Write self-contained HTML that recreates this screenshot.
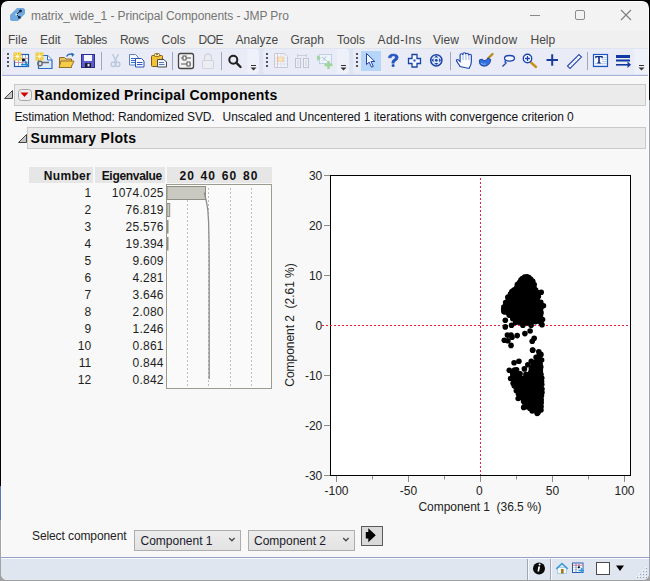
<!DOCTYPE html>
<html><head><meta charset="utf-8">
<style>
*{margin:0;padding:0;box-sizing:border-box}
html,body{width:650px;height:581px;overflow:hidden;background:#000;font-family:"Liberation Sans",sans-serif}
.a{position:absolute}
.t{position:absolute;white-space:nowrap;font-size:12px;line-height:12px;color:#1e1e1e}
.r{text-align:right}
.b{font-weight:bold}
svg{position:absolute;overflow:visible}
</style></head>
<body>
<div class="a" style="left:0;top:486px;width:1px;height:34px;background:#5a78b8"></div>
<div class="a" style="left:0;top:520px;width:12px;height:61px;background:#a4a4a4"></div>
<div class="a" style="left:649px;top:100px;width:1px;height:481px;background:#9ea2b2"></div>
<div class="a" style="left:0;top:575px;width:650px;height:6px;background:#a0a0a0"></div>
<div id="frame" class="a" style="left:1px;top:1px;width:648px;height:579px;background:#fcfcfc;border-radius:7px 7px 6px 6px;overflow:hidden">
<div class="a" style="left:-1px;top:-1px;width:650px;height:581px">
 <!-- title bar -->
 <div class="a" style="left:2px;top:2px;width:646px;height:29px;background:#f3f3f3"></div>
 <svg style="left:0;top:0" width="650" height="31">
  <polygon points="17,8 23.5,8 25,9.5 25,13.8 19,20 17.5,21 11.5,21 10,19.5 10,15" fill="#6fa9e0"/>
  <polyline points="20.5,11 16.3,14.5 19.4,17.4" fill="none" stroke="#1b2535" stroke-width="1"/>
  <rect x="19.3" y="9.8" width="2.4" height="2.4" rx="0.6" fill="#0f1a2a"/>
  <rect x="18.2" y="16.2" width="2.4" height="2.4" rx="0.6" fill="#0f1a2a"/>
  <circle cx="16.3" cy="14.5" r="1" fill="#d8ecff"/>
  <line x1="530" y1="15.5" x2="540" y2="15.5" stroke="#8a8a8a" stroke-width="1"/>
  <rect x="575.5" y="10.5" width="9" height="9" rx="1.5" fill="none" stroke="#8a8a8a" stroke-width="1"/>
  <path d="M621 10 L631 20 M631 10 L621 20" stroke="#7e7e7e" stroke-width="1.1"/>
 </svg>
 <div class="t" style="left:31px;top:10px;color:#757575;letter-spacing:-0.09px">matrix_wide_1 - Principal Components - JMP Pro</div>

 <!-- menu bar -->
 <div class="a" style="left:2px;top:31px;width:646px;height:17px;background:#f0f0f0"></div>
 <div class="t" style="left:8px;top:34px;color:#474747">File</div>
 <div class="t" style="left:40px;top:34px;color:#474747">Edit</div>
 <div class="t" style="left:74.5px;top:34px;color:#474747;letter-spacing:-0.4px">Tables</div>
 <div class="t" style="left:120px;top:34px;color:#474747;letter-spacing:-0.3px">Rows</div>
 <div class="t" style="left:161.5px;top:34px;color:#474747">Cols</div>
 <div class="t" style="left:198.5px;top:34px;color:#474747;letter-spacing:-0.5px">DOE</div>
 <div class="t" style="left:235.5px;top:34px;color:#474747">Analyze</div>
 <div class="t" style="left:290.5px;top:34px;color:#474747">Graph</div>
 <div class="t" style="left:337px;top:34px;color:#474747">Tools</div>
 <div class="t" style="left:377.5px;top:34px;color:#474747;letter-spacing:0.45px">Add-Ins</div>
 <div class="t" style="left:433px;top:34px;color:#474747">View</div>
 <div class="t" style="left:472.5px;top:34px;color:#474747;letter-spacing:0.4px">Window</div>
 <div class="t" style="left:530.5px;top:34px;color:#474747">Help</div>

 <!-- toolbar -->
 <div class="a" style="left:2px;top:48px;width:646px;height:27px;background:#dfe4f2"></div>
 <div class="a" style="left:3px;top:49px;width:256px;height:25px;background:#e9ecf6;border-radius:4px"></div>
 <div class="a" style="left:263px;top:49px;width:86px;height:25px;background:#e9ecf6;border-radius:4px"></div>
 <div class="a" style="left:353px;top:49px;width:295px;height:25px;background:#e9ecf6;border-radius:4px 0 0 4px"></div>
 <div class="a" style="left:2px;top:75px;width:646px;height:1px;background:#a7b0d8"></div>
 <div class="a" style="left:2px;top:76px;width:646px;height:1px;background:#fcfcfc"></div>
 <svg id="tb" style="left:0;top:0" width="650" height="76">
  <!-- chevron lighter areas -->
  <path d="M247.5 49h7.5a4 4 0 0 1 4 4v17a4 4 0 0 1-4 4h-7.5z" fill="#eef1fa"/>
  <path d="M337 49h8a4 4 0 0 1 4 4v17a4 4 0 0 1-4 4h-8z" fill="#eef1fa"/>
  <rect x="634.5" y="49" width="14" height="25" fill="#eef1fa"/>
  <!-- grips -->
  <g fill="#525260">
   <rect x="7" y="53" width="2" height="2"/><rect x="7" y="57" width="2" height="2"/><rect x="7" y="61" width="2" height="2"/><rect x="7" y="65" width="2" height="2"/>
   <rect x="266" y="53" width="2" height="2"/><rect x="266" y="57" width="2" height="2"/><rect x="266" y="61" width="2" height="2"/><rect x="266" y="65" width="2" height="2"/>
   <rect x="356" y="53" width="2" height="2"/><rect x="356" y="57" width="2" height="2"/><rect x="356" y="61" width="2" height="2"/><rect x="356" y="65" width="2" height="2"/>
  </g>
  <!-- icon1 new data table -->
  <rect x="14.5" y="54.5" width="14" height="12" fill="#fff" stroke="#1f5db5" stroke-width="1.2"/>
  <path d="M15 58.5H28M15 62.5H28" stroke="#e07a7a" stroke-width="0.8"/>
  <path d="M18.5 55V66M22.5 55V66M25.5 55V66" stroke="#7aa0d8" stroke-width="0.8"/>
  <path d="M13.5 52.5h8v8h-8z" fill="#f0c838"/>
  <path d="M17.5 52.5v8M13.5 56.5h8M14.5 53.5l6 6M20.5 53.5l-6 6" stroke="#fbeaa0" stroke-width="0.8"/>
  <circle cx="17.5" cy="56.5" r="1.3" fill="#fffbe8"/>
  <circle cx="23.5" cy="60" r="1.6" fill="#111"/>
  <path d="M21 64.5h8M25.5 61l2 6" stroke="#1b8ad8" stroke-width="1.6"/>
  <!-- icon2 new script -->
  <path d="M38.5 55.5h9l4.5 4.5v8.5h-13.5z" fill="#dceafa" stroke="#2d6cc0" stroke-width="1.2"/>
  <path d="M47.5 55.5v4.5h4.5" fill="#fff" stroke="#2d6cc0" stroke-width="1"/>
  <path d="M35.5 52.5h8v8h-8z" fill="#f0c838"/>
  <path d="M39.5 52.5v8M35.5 56.5h8M36.5 53.5l6 6M42.5 53.5l-6 6" stroke="#fbeaa0" stroke-width="0.8"/>
  <circle cx="39.5" cy="56.5" r="1.3" fill="#fffbe8"/>
  <circle cx="40" cy="63.5" r="2.2" fill="none" stroke="#6a6a6a" stroke-width="1.4"/>
  <path d="M42 62.5h7" stroke="#6a6a6a" stroke-width="1.6"/>
  <!-- icon3 folder -->
  <path d="M59.5 57.5h5l1.5 1.5h5.5v8.5h-12z" fill="#e9c15e" stroke="#8a6a2a" stroke-width="1"/>
  <path d="M61 61h13l-3 6.5h-12z" fill="#f6cd45" stroke="#8a6a2a" stroke-width="0.9"/>
  <path d="M66.5 56.5q2-3.5 6-2" fill="none" stroke="#2a6ab8" stroke-width="1.4"/>
  <path d="M71.5 52.5l3 2-2.5 2.5z" fill="#2a6ab8"/>
  <!-- icon4 floppy -->
  <rect x="81.5" y="54.5" width="13" height="13" fill="#5b5bd0" stroke="#2e2e8a" stroke-width="1"/>
  <rect x="84" y="55" width="8" height="6" fill="#f4f6fb"/>
  <rect x="85" y="63" width="6" height="4.5" fill="#1a1a2a"/>
  <rect x="87.5" y="63.8" width="2" height="2.6" fill="#e8e8f0"/>
  <!-- separators -->
  <g fill="#a2a6ba">
   <rect x="101" y="52" width="1" height="18"/><rect x="172" y="52" width="1" height="18"/><rect x="221" y="52" width="1" height="18"/>
   <rect x="450" y="52" width="1" height="18"/><rect x="587" y="52" width="1" height="18"/>
  </g>
  <!-- scissors disabled -->
  <path d="M112.5 54l4 8M118.5 54l-4 8" stroke="#b9c6de" stroke-width="1.4"/>
  <circle cx="113.3" cy="64.3" r="2.2" fill="none" stroke="#b9c6de" stroke-width="1.4"/>
  <circle cx="117.7" cy="64.3" r="2.2" fill="none" stroke="#b9c6de" stroke-width="1.4"/>
  <!-- copy -->
  <path d="M129.5 54.5h6l2.5 2.5v8h-8.5z" fill="#f6f9ff" stroke="#6080b8" stroke-width="1"/>
  <path d="M131 58.5h5M131 60.5h5M131 62.5h4" stroke="#3a6ad0" stroke-width="1"/>
  <path d="M135.5 58.5h6l2.5 2.5v6h-8.5z" fill="#ffffff" stroke="#2a55b8" stroke-width="1"/>
  <path d="M137 62.5h5.5M137 64.5h5.5" stroke="#2a5ac8" stroke-width="1"/>
  <!-- paste -->
  <rect x="151.5" y="55.5" width="11" height="11" rx="1" fill="#f2c232" stroke="#7a5a20" stroke-width="1"/>
  <rect x="154.5" y="53.5" width="5" height="3" rx="1" fill="#f8e8a0" stroke="#7a5a20" stroke-width="0.8"/>
  <circle cx="157" cy="54.5" r="0.8" fill="#7a5a20"/>
  <path d="M157.5 59.5h6.5l2.5 2.5v5h-9z" fill="#eef2fa" stroke="#4a4a50" stroke-width="1"/>
  <path d="M159 62.5h5M159 64.5h5.5" stroke="#5a7ab8" stroke-width="1"/>
  <!-- settings -->
  <rect x="178.5" y="53.5" width="15" height="15" rx="2" fill="#f4f4f4" stroke="#454545" stroke-width="1.3"/>
  <path d="M181 58h10M181 64h10" stroke="#555" stroke-width="1"/>
  <rect x="183" y="56" width="3" height="4" fill="#fff" stroke="#444" stroke-width="0.9"/>
  <rect x="187" y="62" width="3" height="4" fill="#fff" stroke="#444" stroke-width="0.9"/>
  <!-- lock disabled -->
  <path d="M204.5 60v-2.5a3.5 3.5 0 0 1 7 0v2.5" fill="none" stroke="#d2d4da" stroke-width="1.3"/>
  <rect x="202.5" y="60.5" width="11" height="8" rx="1" fill="#eceef4" stroke="#d2d4da" stroke-width="1.1"/>
  <!-- magnifier -->
  <circle cx="233.3" cy="59.8" r="4" fill="none" stroke="#222" stroke-width="2"/>
  <path d="M236.2 62.7l4.3 4.3" stroke="#222" stroke-width="2.4" stroke-linecap="round"/>
  <!-- dropdown arrows -->
  <g fill="#333">
   <rect x="251" y="65" width="5" height="1"/><path d="M250.5 67.5h6l-3 3z"/>
   <rect x="341" y="65" width="5" height="1"/><path d="M340.5 67.5h6l-3 3z"/>
   <rect x="639" y="65" width="5" height="1"/><path d="M638.5 67.5h6l-3 3z"/>
  </g>
  <!-- section2 disabled icons -->
  <path d="M274.5 53.5h10l3 3v11h-13z" fill="#f4f6fb" stroke="#c4cade" stroke-width="1"/>
  <path d="M275 58h12M275 61h12M275 64h12M281 54v13M284 54v13" stroke="#d4dcec" stroke-width="0.8"/>
  <rect x="277" y="56.5" width="7" height="5.5" fill="#f3d4b4"/>
  <rect x="279" y="57.5" width="3" height="3.5" fill="#f4ecb0"/>
  <path d="M277.5 54v13.5" stroke="#eab0b0" stroke-width="0.8"/>
  <rect x="295.5" y="58.5" width="5" height="9" fill="#eef0f6" stroke="#bfc3d2" stroke-width="1"/>
  <rect x="303.5" y="58.5" width="5" height="9" fill="#eef0f6" stroke="#bfc3d2" stroke-width="1"/>
  <path d="M297 61h2M297 63h2M297 65h2M305 61h2M305 63h2M305 65h2M298 55.5h8" stroke="#c0c4d2" stroke-width="0.8"/>
  <path d="M297.5 54v3M306.5 54v3" stroke="#c0c4d2" stroke-width="0.8"/>
  <rect x="319.5" y="54.5" width="12" height="9" fill="#f0f3f8" stroke="#bcd0e8" stroke-width="1"/>
  <path d="M317 55l4 3-4 3z" fill="#9fd49a"/>
  <path d="M322 57l5 4M326 56.5l-3 4" stroke="#9ec0e4" stroke-width="0.9"/>
  <path d="M328.5 61v8M324.5 65h8" stroke="#9fd49a" stroke-width="2.4"/>
  <!-- selected arrow box -->
  <rect x="361" y="51" width="20" height="20" fill="#b5d6f8"/>
  <path d="M366.5 53.5v11l2.7-2.3 2.3 5 1.8-0.8-2.2-4.9h3.7z" fill="#f4f8ff" stroke="#2242a8" stroke-width="1"/>
  <!-- question -->
  <path d="M388.3 57.8Q388.6 54 393.2 54Q398.2 54 398.2 57.6Q398.2 59.9 395.3 61.2Q394.3 61.8 394.3 63.2H391.8Q391.6 60.6 393.4 59.5Q395.3 58.4 395.3 57.4Q395.3 55.8 393.3 55.8Q391.4 55.8 391.3 57.8Z" fill="#2455c0" stroke="#2455c0" stroke-width="0.5"/><circle cx="393.1" cy="65.4" r="1.5" fill="#2455c0"/>
  <!-- cross -->
  <path d="M412 54.5h5v4h3.5v5h-3.5v3.5h-5v-3.5h-3.5v-5h3.5z" fill="#f6f9ff" stroke="#1a44a8" stroke-width="1.3"/>
  <rect x="413.5" y="59.5" width="2" height="2" fill="#1a44a8"/>
  <!-- target -->
  <circle cx="436.3" cy="60.3" r="5.6" fill="#dbe6f8" stroke="#1a44a8" stroke-width="1.5"/>
  <path d="M436.3 55.5l-2 2h4zM436.3 65.1l-2-2h4zM431.5 60.3l2-2v4zM441.1 60.3l-2-2v4z" fill="#1a44a8"/>
  <circle cx="436.3" cy="60.3" r="1.4" fill="#1a44a8"/>
  <!-- hand -->
  <g transform="translate(456 0) scale(1.17 1) translate(-456 0)">
  <path d="M459.5 66.5l-3-5.5q-0.5-1.5 1-1.5l2 2v-6.5q0-1.3 1.2-1.3t1.2 1.3v-1q0-1.2 1.2-1.2t1.2 1.2v0.5q0-1.2 1.2-1.2t1.2 1.2v1q0-1.2 1.2-1.2t1.2 1.2v6.5q0 2.5-2 6.5z" fill="#fbfcff" stroke="#1a44b0" stroke-width="1"/>
  <path d="M462 55v5M464.5 55v5M467 55v5" stroke="#6a8ad0" stroke-width="0.6"/>
  </g>
  <!-- brush -->
  <path d="M488 58.5l4.5-4.5" stroke="#b88a20" stroke-width="2.4" stroke-linecap="round"/>
  <path d="M479.6 59.8Q478.4 66.2 484.5 66.2Q490 65.8 490.8 59.6L488 58Q486.6 60.8 484.2 60.6Q482.6 60.4 482.4 59.2Z" fill="#2f6fe2" stroke="#1a3a98" stroke-width="0.9"/>
  <path d="M481 63.2Q483 64.8 486 64" fill="none" stroke="#9cc4ff" stroke-width="0.8"/>
  <!-- lasso -->
  <ellipse cx="509.5" cy="58.3" rx="5" ry="2.8" fill="#f3f6ff" stroke="#1a44b0" stroke-width="1.3"/>
  <path d="M505.5 60.5q-1 2 0.5 2.5l-3.5 3.5" fill="none" stroke="#1a44b0" stroke-width="1.3"/>
  <!-- zoom plus -->
  <path d="M531 62.5l5 4.5" stroke="#c8901e" stroke-width="2.4" stroke-linecap="round"/>
  <circle cx="527.5" cy="58.5" r="4.2" fill="#fff" stroke="#1a44b0" stroke-width="1.4"/>
  <path d="M525 58.5h5M527.5 56v5" stroke="#1a44b0" stroke-width="1.3"/>
  <!-- plus -->
  <path d="M546.5 60h11.5M552.2 54.2v11.5" stroke="#1c3a9a" stroke-width="2"/>
  <!-- ruler -->
  <path d="M567.5 66l11.5-11.5 2.5 2.5-11.5 11.5z" fill="#fff" stroke="#2a4ab0" stroke-width="1.1"/>
  <path d="M571 64.5l1 1M573 62.5l1 1M575 60.5l1 1M577 58.5l1 1" stroke="#7a90d0" stroke-width="0.8"/>
  <!-- T box -->
  <rect x="593.5" y="54.5" width="14" height="12" fill="#fbfcff" stroke="#1a55c8" stroke-width="1.2"/>
  <path d="M602 57.5h5M602 59.5h5M602 61.5h5M595 63.5h12M595 65.3h12" stroke="#b4c8e6" stroke-width="0.9"/>
  <path d="M595.3 56h7.4v2.2h-0.9l-0.4-0.9h-1.6v4.9l0.9 0.4v0.8h-3.4v-0.8l0.9-0.4v-4.9h-1.6l-0.4 0.9h-0.9z" fill="#0c2a88"/>
  <!-- lines arrow -->
  <rect x="616" y="55" width="14" height="3" fill="#0f38a0"/>
  <rect x="616" y="59.5" width="14" height="2" fill="#0f38a0"/>
  <rect x="616" y="64" width="12" height="1.6" fill="#0f38a0"/>
  <path d="M627.5 61.5l3.5 3.3-3.5 3.3z" fill="#0f38a0"/>
 </svg>

 <!-- content -->
 <div class="a" style="left:2px;top:77px;width:646px;height:480px;background:#f8f8f8"></div>
 <!-- header 1 -->
 <div class="a" style="left:14px;top:84px;width:632px;height:22px;background:#ebebeb;border:1px solid #c9c9c9"></div>
 <div class="a" style="left:27px;top:127px;width:619px;height:22px;background:#ebebeb;border:1px solid #c9c9c9"></div>
 <svg style="left:0;top:0" width="650" height="160">
  <path d="M4.5 98.5L12.5 90.5V98.5Z" fill="#c4c4c4" stroke="#454545" stroke-width="1" stroke-linejoin="round"/>
  <path d="M18.5 142.5L26.5 134.5V142.5Z" fill="#c4c4c4" stroke="#454545" stroke-width="1" stroke-linejoin="round"/>
  <rect x="18.5" y="89.5" width="13" height="11" rx="3" fill="#eeeeee" stroke="#a6a6a6" stroke-width="1"/>
  <path d="M20.5 92.5h8l-4 4.5z" fill="#d40000"/>
 </svg>
 <div class="t b" style="left:34.3px;top:88px;font-size:14px;line-height:14px;color:#050505;letter-spacing:0.24px">Randomized Principal Components</div>
 <div class="t" style="left:14.5px;top:111px;color:#141418;letter-spacing:-0.14px">Estimation Method: Randomized SVD.</div>
 <div class="t" style="left:222.5px;top:111px;color:#141418;letter-spacing:-0.035px">Unscaled and Uncentered 1 iterations with convergence criterion 0</div>
 <div class="t b" style="left:30.5px;top:131px;font-size:14px;line-height:14px;color:#050505;letter-spacing:0.3px">Summary Plots</div>

 <!-- table header -->
 <div class="a" style="left:29px;top:167px;width:64px;height:16px;background:#e6e6e6"></div>
 <div class="a" style="left:95px;top:167px;width:70px;height:16px;background:#e6e6e6"></div>
 <div class="a" style="left:167px;top:167px;width:105px;height:16px;background:#e6e6e6"></div>
 <div class="t b r" style="left:30px;width:61px;top:170px;color:#111;letter-spacing:0.3px">Number</div>
 <div class="t b r" style="left:96px;width:66px;top:170px;color:#111;letter-spacing:-0.3px">Eigenvalue</div>
 <div class="t b" style="left:179.5px;top:169.5px;color:#111;letter-spacing:1px">20</div>
 <div class="t b" style="left:200.5px;top:169.5px;color:#111;letter-spacing:1px">40</div>
 <div class="t b" style="left:221.8px;top:169.5px;color:#111;letter-spacing:1px">60</div>
 <div class="t b" style="left:243px;top:169.5px;color:#111;letter-spacing:1px">80</div>
 <div class="t r" style="left:40px;width:51.2px;top:187px">1</div>
 <div class="t r" style="left:100px;width:63.8px;letter-spacing:0.25px;top:187px">1074.025</div>
 <div class="t r" style="left:40px;width:51.2px;top:204px">2</div>
 <div class="t r" style="left:100px;width:63.8px;letter-spacing:0.25px;top:204px">76.819</div>
 <div class="t r" style="left:40px;width:51.2px;top:221px">3</div>
 <div class="t r" style="left:100px;width:63.8px;letter-spacing:0.25px;top:221px">25.576</div>
 <div class="t r" style="left:40px;width:51.2px;top:238px">4</div>
 <div class="t r" style="left:100px;width:63.8px;letter-spacing:0.25px;top:238px">19.394</div>
 <div class="t r" style="left:40px;width:51.2px;top:255px">5</div>
 <div class="t r" style="left:100px;width:63.8px;letter-spacing:0.25px;top:255px">9.609</div>
 <div class="t r" style="left:40px;width:51.2px;top:272px">6</div>
 <div class="t r" style="left:100px;width:63.8px;letter-spacing:0.25px;top:272px">4.281</div>
 <div class="t r" style="left:40px;width:51.2px;top:289px">7</div>
 <div class="t r" style="left:100px;width:63.8px;letter-spacing:0.25px;top:289px">3.646</div>
 <div class="t r" style="left:40px;width:51.2px;top:306px">8</div>
 <div class="t r" style="left:100px;width:63.8px;letter-spacing:0.25px;top:306px">2.080</div>
 <div class="t r" style="left:40px;width:51.2px;top:323px">9</div>
 <div class="t r" style="left:100px;width:63.8px;letter-spacing:0.25px;top:323px">1.246</div>
 <div class="t r" style="left:40px;width:51.2px;top:340px">10</div>
 <div class="t r" style="left:100px;width:63.8px;letter-spacing:0.25px;top:340px">0.861</div>
 <div class="t r" style="left:40px;width:51.2px;top:357px">11</div>
 <div class="t r" style="left:100px;width:63.8px;letter-spacing:0.25px;top:357px">0.844</div>
 <div class="t r" style="left:40px;width:51.2px;top:374px">12</div>
 <div class="t r" style="left:100px;width:63.8px;letter-spacing:0.25px;top:374px">0.842</div>


 <!-- bar chart -->
 <svg style="left:0;top:0" width="650" height="581">
  <rect x="166.5" y="184.5" width="105" height="204" fill="#fafafa" stroke="#9c9c8e" stroke-width="1"/>
  <g stroke="#bdbdbd" stroke-width="1" stroke-dasharray="2,2">
   <path d="M187.5 188V386M208.5 188V386M230.5 188V386M251.5 188V386"/>
  </g>
  <g fill="#c9c9c1" stroke="#8f8f86" stroke-width="1">
   <rect x="167" y="186.5" width="38.5" height="13"/>
   <rect x="167" y="203.5" width="2.7" height="13"/>
  </g>
  <rect x="167" y="220" width="1.5" height="13.5" fill="#8f8f86"/>
  <rect x="167" y="237" width="1.5" height="13.5" fill="#8f8f86"/>
  <polyline points="204.3,192.5 206.5,202 207.8,210 208.6,222 209,240 209.2,262 209.2,379" fill="none" stroke="#8c8c8c" stroke-width="1.3"/>
 </svg>
 <!-- scatter -->
 <svg style="left:0;top:0" width="650" height="581">
  <rect x="330.5" y="175.5" width="300" height="300" fill="#fff" stroke="#000" stroke-width="1"/>
  <g stroke="#8c8c8c" stroke-width="1">
   <path d="M324 175.5h6M324 225.5h6M324 275.5h6M324 375.5h6M324 425.5h6M324 475.5h6"/>
   <path d="M336.5 476v6M408.5 476v6M480.5 476v6M552.5 476v6M624.5 476v6"/>
   <path d="M372.5 476v3.5M444.5 476v3.5M516.5 476v3.5M588.5 476v3.5"/>
  </g>
  <g stroke="#e61e3c" stroke-width="1" stroke-dasharray="2,2">
   <path d="M480.5 178V475"/>
   <path d="M322 325.5H630"/>
  </g>
  <g id="dots" fill="#000">
   <polygon points="524.3,276.1 526.9,275.6 529.5,276.3 532.2,278.1 534.5,280.5 536.1,284.4 537.1,289.1 540.8,292.7 538.6,298.8 541.5,301.8 544.6,305.8 542.4,311.8 542.0,319.5 541.6,323.8 535.6,323.6 530.9,324.8 522.6,324.2 514.6,323.5 511.9,319.7 508.2,316.0 502.4,312.8 501.7,310.0 502.4,306.4 504.6,301.9 507.1,297.3 508.8,293.1 510.4,290.8 512.6,288.8 516.0,283.7 517.9,281.2 519.9,278.8 521.9,277.0"/>
   <circle cx="524.6" cy="277.1" r="2.75"/>
   <circle cx="527.0" cy="276.7" r="2.75"/>
   <circle cx="528.9" cy="277.5" r="2.75"/>
   <circle cx="530.8" cy="279.3" r="2.75"/>
   <circle cx="532.8" cy="281.2" r="2.75"/>
   <circle cx="534.2" cy="284.4" r="2.75"/>
   <circle cx="535.7" cy="290.1" r="2.75"/>
   <circle cx="539.0" cy="292.8" r="2.75"/>
   <circle cx="538.4" cy="296.5" r="2.75"/>
   <circle cx="537.2" cy="299.0" r="2.75"/>
   <circle cx="540.8" cy="302.3" r="2.75"/>
   <circle cx="543.5" cy="305.8" r="2.75"/>
   <circle cx="540.6" cy="311.1" r="2.75"/>
   <circle cx="540.5" cy="315.7" r="2.75"/>
   <circle cx="540.2" cy="319.4" r="2.75"/>
   <circle cx="540.8" cy="322.5" r="2.75"/>
   <circle cx="535.5" cy="321.7" r="2.75"/>
   <circle cx="530.3" cy="323.0" r="2.75"/>
   <circle cx="526.9" cy="322.9" r="2.75"/>
   <circle cx="522.6" cy="322.8" r="2.75"/>
   <circle cx="519.0" cy="322.2" r="2.75"/>
   <circle cx="515.6" cy="322.4" r="2.75"/>
   <circle cx="512.8" cy="318.8" r="2.75"/>
   <circle cx="509.2" cy="315.2" r="2.75"/>
   <circle cx="503.9" cy="311.6" r="2.75"/>
   <circle cx="503.7" cy="309.5" r="2.75"/>
   <circle cx="503.8" cy="307.1" r="2.75"/>
   <circle cx="505.6" cy="302.6" r="2.75"/>
   <circle cx="508.0" cy="298.1" r="2.75"/>
   <circle cx="510.3" cy="293.9" r="2.75"/>
   <circle cx="511.9" cy="291.6" r="2.75"/>
   <circle cx="513.9" cy="289.9" r="2.75"/>
   <circle cx="517.3" cy="284.5" r="2.75"/>
   <circle cx="519.4" cy="282.6" r="2.75"/>
   <circle cx="520.9" cy="280.0" r="2.75"/>
   <circle cx="522.3" cy="278.5" r="2.75"/>
   <polygon points="517.1,367.9 521.2,373.4 522.9,381.1 525.6,372.7 529.0,374.1 532.3,361.9 536.3,357.9 539.1,352.9 541.3,354.4 541.8,360.7 542.4,370.4 543.1,381.3 543.1,392.3 543.1,403.2 542.5,411.0 539.5,414.0 537.5,415.1 531.9,411.9 525.9,407.9 524.0,405.3 519.9,398.4 515.1,391.7 512.5,386.5 511.8,379.8 511.1,371.9 513.3,368.5"/>
   <circle cx="516.6" cy="369.8" r="2.75"/>
   <circle cx="520.1" cy="373.8" r="2.75"/>
   <circle cx="521.2" cy="378.5" r="2.75"/>
   <circle cx="522.3" cy="382.6" r="2.75"/>
   <circle cx="524.2" cy="377.9" r="2.75"/>
   <circle cx="525.9" cy="374.3" r="2.75"/>
   <circle cx="529.4" cy="375.2" r="2.75"/>
   <circle cx="530.6" cy="372.6" r="2.75"/>
   <circle cx="531.3" cy="369.0" r="2.75"/>
   <circle cx="532.7" cy="366.2" r="2.75"/>
   <circle cx="534.0" cy="363.0" r="2.75"/>
   <circle cx="537.3" cy="358.8" r="2.75"/>
   <circle cx="539.3" cy="354.7" r="2.75"/>
   <circle cx="540.5" cy="354.9" r="2.75"/>
   <circle cx="540.0" cy="360.6" r="2.75"/>
   <circle cx="540.2" cy="364.0" r="2.75"/>
   <circle cx="540.8" cy="367.0" r="2.75"/>
   <circle cx="540.4" cy="370.4" r="2.75"/>
   <circle cx="541.0" cy="374.2" r="2.75"/>
   <circle cx="541.8" cy="377.9" r="2.75"/>
   <circle cx="541.6" cy="381.5" r="2.75"/>
   <circle cx="541.8" cy="384.6" r="2.75"/>
   <circle cx="542.0" cy="388.9" r="2.75"/>
   <circle cx="542.0" cy="392.6" r="2.75"/>
   <circle cx="541.5" cy="395.8" r="2.75"/>
   <circle cx="541.2" cy="399.7" r="2.75"/>
   <circle cx="541.2" cy="402.8" r="2.75"/>
   <circle cx="541.1" cy="406.4" r="2.75"/>
   <circle cx="541.0" cy="409.9" r="2.75"/>
   <circle cx="538.1" cy="412.5" r="2.75"/>
   <circle cx="537.2" cy="413.5" r="2.75"/>
   <circle cx="532.2" cy="411.0" r="2.75"/>
   <circle cx="529.9" cy="408.4" r="2.75"/>
   <circle cx="526.7" cy="406.7" r="2.75"/>
   <circle cx="525.1" cy="404.1" r="2.75"/>
   <circle cx="523.6" cy="401.6" r="2.75"/>
   <circle cx="521.1" cy="397.6" r="2.75"/>
   <circle cx="518.4" cy="393.9" r="2.75"/>
   <circle cx="516.3" cy="390.7" r="2.75"/>
   <circle cx="514.2" cy="385.7" r="2.75"/>
   <circle cx="513.1" cy="383.3" r="2.75"/>
   <circle cx="513.3" cy="379.3" r="2.75"/>
   <circle cx="512.9" cy="375.5" r="2.75"/>
   <circle cx="512.5" cy="372.8" r="2.75"/>
   <circle cx="514.5" cy="370.0" r="2.75"/>
   <circle cx="505.3" cy="320.2" r="2.8"/>
   <circle cx="505.3" cy="326.9" r="2.8"/>
   <circle cx="511.5" cy="325.3" r="2.8"/>
   <circle cx="522.9" cy="325.3" r="2.8"/>
   <circle cx="531.1" cy="325.3" r="2.8"/>
   <circle cx="542.0" cy="324.8" r="2.8"/>
   <circle cx="542.5" cy="319.6" r="2.8"/>
   <circle cx="530.1" cy="331.0" r="2.8"/>
   <circle cx="524.9" cy="333.6" r="2.8"/>
   <circle cx="517.2" cy="335.6" r="2.8"/>
   <circle cx="507.4" cy="335.1" r="2.8"/>
   <circle cx="511.0" cy="335.1" r="2.8"/>
   <circle cx="512.0" cy="337.2" r="2.8"/>
   <circle cx="504.3" cy="340.3" r="2.8"/>
   <circle cx="507.9" cy="340.8" r="2.8"/>
   <circle cx="511.0" cy="345.4" r="2.8"/>
   <circle cx="534.2" cy="338.2" r="2.8"/>
   <circle cx="532.2" cy="341.3" r="2.8"/>
   <circle cx="532.7" cy="350.1" r="2.8"/>
   <circle cx="509.3" cy="370.3" r="2.8"/>
   <circle cx="510.6" cy="378.5" r="2.8"/>
   <circle cx="518.2" cy="398.5" r="2.8"/>
   <circle cx="523.7" cy="407.4" r="2.8"/>
   <circle cx="532.6" cy="350.3" r="2.8"/>
   <circle cx="538.8" cy="351.7" r="2.8"/>
   <circle cx="540.9" cy="354.4" r="2.8"/>
   <circle cx="536.1" cy="357.2" r="2.8"/>
   <circle cx="541.6" cy="360.0" r="2.8"/>
   <circle cx="531.3" cy="361.3" r="2.8"/>
   <circle cx="527.8" cy="364.8" r="2.8"/>
   <circle cx="524.4" cy="368.9" r="2.8"/>
   <circle cx="514.1" cy="362.7" r="2.8"/>
   <circle cx="518.9" cy="361.3" r="2.8"/>
   <circle cx="541.2" cy="292.3" r="2.8"/>
   <circle cx="506.0" cy="304.0" r="2.8"/>
   <circle cx="504.5" cy="312.0" r="2.8"/>
   <circle cx="508.0" cy="297.0" r="2.8"/>
   <circle cx="542.0" cy="306.0" r="2.8"/>
   <circle cx="541.0" cy="313.0" r="2.8"/>
  </g>
 </svg>
 <div class="t r" style="left:290px;width:32.3px;top:170px;color:#222">30</div>
 <div class="t r" style="left:290px;width:32.3px;top:220px;color:#222">20</div>
 <div class="t r" style="left:290px;width:32.3px;top:270px;color:#222">10</div>
 <div class="t r" style="left:290px;width:32.3px;top:320px;color:#222">0</div>
 <div class="t r" style="left:290px;width:32.3px;top:370px;color:#222">-10</div>
 <div class="t r" style="left:290px;width:32.3px;top:420px;color:#222">-20</div>
 <div class="t r" style="left:290px;width:32.3px;top:470px;color:#222">-30</div>
 <div class="t" style="left:296.5px;width:80px;text-align:center;top:485px;color:#222">-100</div>
 <div class="t" style="left:368.5px;width:80px;text-align:center;top:485px;color:#222">-50</div>
 <div class="t" style="left:439.3px;width:80px;text-align:center;top:485px;color:#222">0</div>
 <div class="t" style="left:512.5px;width:80px;text-align:center;top:485px;color:#222">50</div>
 <div class="t" style="left:584.5px;width:80px;text-align:center;top:485px;color:#222">100</div>
 <div class="t" style="left:418.5px;top:501px;color:#222;letter-spacing:-0.05px">Component 1&nbsp; (36.5 %)</div>
 <div class="t" style="left:228px;top:319px;width:124px;text-align:center;color:#222;transform:rotate(-90deg);letter-spacing:-0.03px">Component 2&nbsp; (2.61 %)</div>

 <!-- bottom controls -->
 <div class="t" style="left:32px;top:530px;color:#222;letter-spacing:-0.1px">Select component</div>
 <div class="a" style="left:134px;top:530px;width:107px;height:21px;background:linear-gradient(#ececec,#e3e3e3);border:1px solid #adadad"></div>
 <div class="a" style="left:248px;top:530px;width:107px;height:21px;background:linear-gradient(#ececec,#e3e3e3);border:1px solid #adadad"></div>
 <div class="t" style="left:140.5px;top:535px;color:#1a1a2a">Component 1</div>
 <div class="t" style="left:254px;top:535px;color:#1a1a2a">Component 2</div>
 <svg style="left:0;top:0" width="650" height="581">
  <path d="M229.2 538l2.7 2.8 2.7-2.8M343.2 538l2.7 2.8 2.7-2.8" fill="none" stroke="#4a4a4a" stroke-width="1.3"/>
  <rect x="361.5" y="526.5" width="21" height="19" fill="#d9d9d9" stroke="#5a5a5a" stroke-width="1"/>
  <path d="M365.8 532H368.3V528.3L375.8 535.3L368.3 542.3V538.5H365.8Z" fill="#000"/>
 </svg>

 <!-- status bar -->
 <div class="a" style="left:1px;top:557px;width:648px;height:1px;background:#95a0cc"></div>
 <div class="a" style="left:1px;top:558px;width:648px;height:1px;background:#fdfdfe"></div>
 <div class="a" style="left:1px;top:559px;width:648px;height:21px;background:#e0e6f0"></div>
 <svg id="status" style="left:0;top:0" width="650" height="581">
  <rect x="527" y="559" width="1" height="21" fill="#a0a6b8"/>
  <rect x="528" y="559" width="1" height="21" fill="#f6f8fc"/>
  <rect x="550" y="559" width="1" height="21" fill="#a0a6b8"/>
  <rect x="551" y="559" width="1" height="21" fill="#f6f8fc"/>
  <circle cx="539" cy="568.5" r="6" fill="#0a0a0a"/>
  <path d="M538.3 566.5h1.8l-1 5h-1.6z" fill="#fff"/>
  <circle cx="539.6" cy="564.5" r="1" fill="#fff"/>
  <rect x="557.5" y="567.5" width="9" height="6" fill="#f2f7fc" stroke="#a8d0ec" stroke-width="1"/>
  <path d="M556.3 568.8l5.7-5.3 5.7 5.3" fill="none" stroke="#3a9ad8" stroke-width="1.6"/>
  <rect x="561" y="569" width="2.6" height="4.5" fill="#a8780f"/>
  <rect x="572.5" y="563" width="10.5" height="9.5" fill="#fff" stroke="#2a5ab0" stroke-width="1"/>
  <path d="M573 565.2h9.5" stroke="#f07070" stroke-width="1"/>
  <path d="M573 567.5h9.5M573 569.8h7" stroke="#c8d4ea" stroke-width="0.8"/>
  <path d="M576 563.5v8.5M579 563.5v4.5" stroke="#3a6ac0" stroke-width="0.7"/>
  <circle cx="578.8" cy="567.3" r="1.1" fill="#111"/>
  <path d="M578.5 570.5h5.5M581.5 568v5" stroke="#2a9ae0" stroke-width="1.5"/>
  <rect x="596.5" y="562.5" width="13" height="12" fill="#fff" stroke="#4a4a4a" stroke-width="1"/>
  <path d="M616 565.5h8l-4 5.5z" fill="#000"/>
  <g fill="#ffffff"><rect x="645" y="567" width="1" height="1"/><rect x="642" y="570" width="1" height="1"/><rect x="645" y="570" width="1" height="1"/><rect x="639" y="573" width="1" height="1"/><rect x="642" y="573" width="1" height="1"/><rect x="645" y="573" width="1" height="1"/><rect x="636" y="576" width="1" height="1"/><rect x="639" y="576" width="1" height="1"/><rect x="642" y="576" width="1" height="1"/><rect x="645" y="576" width="1" height="1"/></g>
  <g fill="#8d9cc4"><rect x="646" y="568" width="1" height="1"/><rect x="643" y="571" width="1" height="1"/><rect x="646" y="571" width="1" height="1"/><rect x="640" y="574" width="1" height="1"/><rect x="643" y="574" width="1" height="1"/><rect x="646" y="574" width="1" height="1"/><rect x="637" y="577" width="1" height="1"/><rect x="640" y="577" width="1" height="1"/><rect x="643" y="577" width="1" height="1"/><rect x="646" y="577" width="1" height="1"/></g>
 </svg>
</div>
</div>
</body></html>
